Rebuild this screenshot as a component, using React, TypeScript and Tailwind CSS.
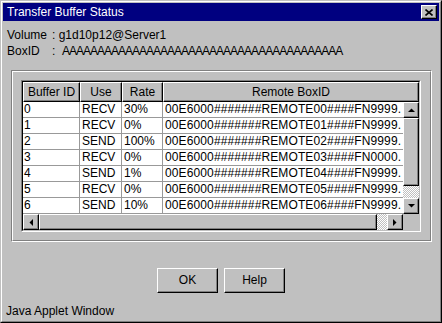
import React from 'react'

const rows = [
  { id: '0', use: 'RECV', rate: '30%', remote: '00E6000#######REMOTE00####FN9999.' },
  { id: '1', use: 'RECV', rate: '0%', remote: '00E6000#######REMOTE01####FN9999.' },
  { id: '2', use: 'SEND', rate: '100%', remote: '00E6000#######REMOTE02####FN9999.' },
  { id: '3', use: 'RECV', rate: '0%', remote: '00E6000#######REMOTE03####FN0000.' },
  { id: '4', use: 'SEND', rate: '1%', remote: '00E6000#######REMOTE04####FN9999.' },
  { id: '5', use: 'RECV', rate: '0%', remote: '00E6000#######REMOTE05####FN9999.' },
  { id: '6', use: 'SEND', rate: '10%', remote: '00E6000#######REMOTE06####FN9999.' },
]

const raised =
  'border border-t-white border-l-white border-b-black border-r-black shadow-[inset_-1px_-1px_0_#808080] bg-[#c0c0c0]'

const dither =
  'bg-[repeating-conic-gradient(#ffffff_0_25%,#c0c0c0_0_50%)] bg-[length:2px_2px]'

function Arrow({ dir }: { dir: 'up' | 'down' | 'left' | 'right' }) {
  const pts = {
    up: '0,4 7,4 3.5,0.5',
    down: '0,0 7,0 3.5,3.5',
    left: '4,0 4,7 0.5,3.5',
    right: '0,0 0,7 3.5,3.5',
  }[dir]
  const vertical = dir === 'up' || dir === 'down'
  return (
    <svg width={vertical ? 7 : 4} height={vertical ? 4 : 7} viewBox={vertical ? '0 0 7 4' : '0 0 4 7'}>
      <polygon points={pts} fill="#000" />
    </svg>
  )
}

function ArrowButton({ dir }: { dir: 'up' | 'down' | 'left' | 'right' }) {
  return (
    <div className={`${raised} w-[16px] h-[16px] flex items-center justify-center shrink-0`}>
      <Arrow dir={dir} />
    </div>
  )
}

export default function App() {
  return (
    <div className="w-[442px] h-[323px] font-['Liberation_Sans',Arial,sans-serif] text-[12px] text-black border border-t-[#c0c0c0] border-l-[#c0c0c0] border-b-black border-r-black">
      <div className="h-full border border-t-white border-l-white border-b-[#808080] border-r-[#808080] bg-[#c0c0c0] p-[1px] flex flex-col">
        {/* title bar */}
        <div className="h-[18px] bg-[#000080] flex items-center justify-between pl-[4px] pr-[2px]">
          <span className="text-white leading-[18px]">Transfer Buffer Status</span>
          <div className={`${raised} w-[16px] h-[14px] flex items-center justify-center`}>
            <svg width="8" height="7" viewBox="0 0 8 7">
              <path d="M0.5 0.5 L7.5 6.5 M7.5 0.5 L0.5 6.5" stroke="#000" strokeWidth="1.6" />
            </svg>
          </div>
        </div>

        {/* info */}
        <div className="mt-[6px] pl-[4px]">
          <div className="flex h-[16px] leading-[16px]">
            <span className="w-[45px]">Volume</span>
            <span>:&nbsp;g1d10p12@Server1</span>
          </div>
          <div className="flex h-[16px] leading-[16px]">
            <span className="w-[45px]">BoxID</span>
            <span>:&nbsp;&nbsp;</span>
            <span className="tracking-[-1px]">AAAAAAAAAAAAAAAAAAAAAAAAAAAAAAAAAAAAAAAA</span>
          </div>
        </div>

        {/* etched panel */}
        <div className="mt-[11px] ml-[8px] w-[421px] border border-t-[#808080] border-l-[#808080] border-b-white border-r-white">
          <div className="border border-t-white border-l-white border-b-[#808080] border-r-[#808080] pt-[8px] pb-[8px] pl-[8px]">
            {/* table scroll pane */}
            <div className="w-[400px] border border-t-[#808080] border-l-[#808080] border-b-white border-r-white">
              <div className="border border-t-black border-l-black border-b-[#c0c0c0] border-r-[#c0c0c0]">
                {/* header */}
                <div className="flex h-[20px] leading-[18px]">
                  <div className={`${raised} w-[57px] text-center`}>Buffer ID</div>
                  <div className={`${raised} w-[42px] text-center`}>Use</div>
                  <div className={`${raised} w-[41px] text-center`}>Rate</div>
                  <div className={`${raised} flex-1 text-center`}>Remote BoxID</div>
                </div>
                {/* body + vertical scrollbar */}
                <div className="flex h-[112px]">
                  <div className="w-[380px] bg-white">
                    {rows.map((r) => (
                      <div key={r.id} className="flex h-[16px] leading-[15px] border-b border-[#999999]">
                        <div className="w-[57px] pl-[1px] border-r border-[#999999]">{r.id}</div>
                        <div className="w-[42px] pl-[2px] border-r border-[#999999]">{r.use}</div>
                        <div className="w-[41px] pl-[2px] border-r border-[#999999]">{r.rate}</div>
                        <div className="w-[240px] pl-[2px] whitespace-nowrap tracking-[0.12px]">{r.remote}</div>
                      </div>
                    ))}
                  </div>
                  <div className="w-[16px] flex flex-col">
                    <ArrowButton dir="up" />
                    <div className={`${raised} h-[68px]`} />
                    <div className={`${dither} flex-1`} />
                    <ArrowButton dir="down" />
                  </div>
                </div>
                {/* horizontal scrollbar */}
                <div className="flex h-[16px]">
                  <div className="w-[380px] flex">
                    <ArrowButton dir="left" />
                    <div className={`${raised} w-[338px]`} />
                    <div className={`${dither} flex-1`} />
                    <ArrowButton dir="right" />
                  </div>
                  <div className="flex-1 bg-[#c0c0c0]" />
                </div>
              </div>
            </div>
          </div>
        </div>

        {/* buttons */}
        <div className="mt-[26px] flex justify-center gap-[6px]">
          <button className={`${raised} w-[61px] h-[25px] leading-[21px] text-center`}>OK</button>
          <button className={`${raised} w-[61px] h-[25px] leading-[21px] text-center`}>Help</button>
        </div>

        {/* footer */}
        <div className="mt-auto pl-[3px] pb-[2px] leading-[14px]">Java Applet Window</div>
      </div>
    </div>
  )
}
